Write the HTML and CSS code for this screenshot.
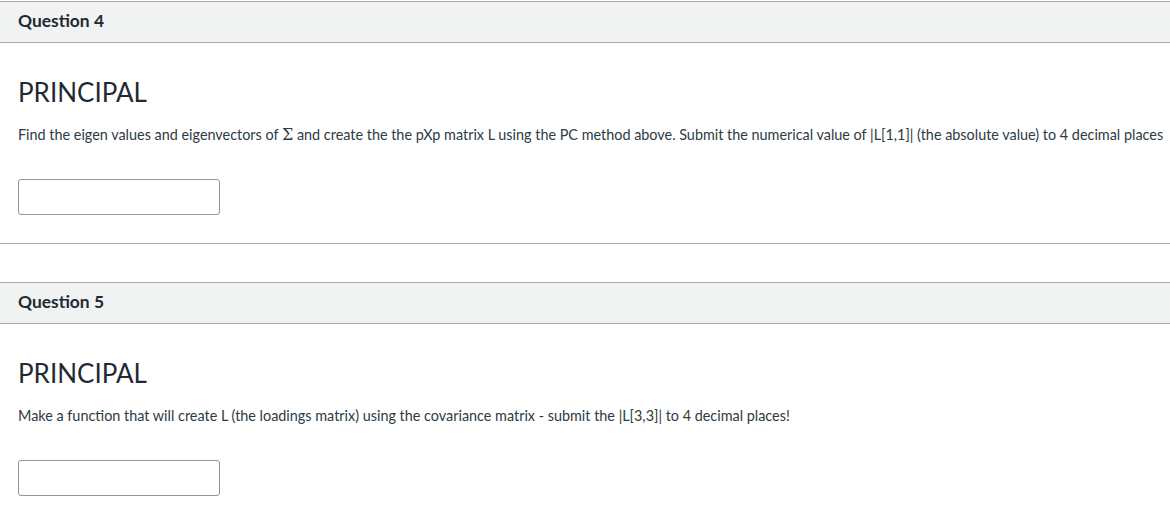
FILE: index.html
```html
<!DOCTYPE html>
<html>
<head>
<meta charset="utf-8">
<link rel="stylesheet" href="styles.css">
</head>
<body>
<div class="quiz">
  <div class="question">
    <div class="q-header">Question 4</div>
    <div class="q-body">
      <h2 class="q-title">PRINCIPAL</h2>
      <p class="q-text">Find the eigen values and eigenvectors of <span class="math">Σ</span> and create the the pXp matrix L using the PC method above. Submit the numerical value of |L[1,1]| (the absolute value) to 4 decimal places</p>
      <input class="answer" type="text">
    </div>
    <div class="divider"></div>
  </div>
  <div class="question">
    <div class="q-header">Question 5</div>
    <div class="q-body">
      <h2 class="q-title">PRINCIPAL</h2>
      <p class="q-text">Make a function that will create L (the loadings matrix) using the covariance matrix - submit the |L[3,3]| to 4 decimal places!</p>
      <input class="answer" type="text">
    </div>
    <div class="divider"></div>
  </div>
</div>
</body>
</html>
```

FILE: styles.css
```css
html, body {
  margin: 0;
  padding: 0;
  background: #ffffff;
}
body {
  font-family: Lato, "Open Sans", sans-serif;
  color: #2d3b45;
}
.quiz {
  padding-top: 1px;
  width: 1170px;
  overflow: hidden;
}
.question {
  margin-bottom: 38px;
}
.q-header {
  box-sizing: border-box;
  height: 42px;
  border-top: 1px solid #a8a8a8;
  border-bottom: 1px solid #a8a8a8;
  background: #f1f2f2;
  padding: 0 18px 3px;
  display: flex;
  align-items: center;
  font-size: 17.4px;
  font-weight: 700;
  color: #1f2a33;
}
.q-body {
  padding: 0 18px;
  display: flex;
  flex-direction: column;
  align-items: flex-start;
}
.q-title {
  margin: 34px 0 0;
  font-size: 26px;
  line-height: 30px;
  font-weight: 400;
  color: #1f2a33;
}
.q-text {
  margin: 18px 0 0;
  font-size: 14.4px;
  line-height: 20px;
  white-space: nowrap;
}
.math {
  font-family: "DejaVu Serif", "Liberation Serif", serif;
  font-size: 16px;
}
.answer {
  margin: 34px 0 0;
  box-sizing: border-box;
  width: 202px;
  height: 36px;
  border: 1px solid #8b96a0;
  border-radius: 3px;
  background: #fff;
  padding: 0 6px;
  font: inherit;
}
.divider {
  margin-top: 28px;
  height: 1px;
  background: #a8a8a8;
}
```
